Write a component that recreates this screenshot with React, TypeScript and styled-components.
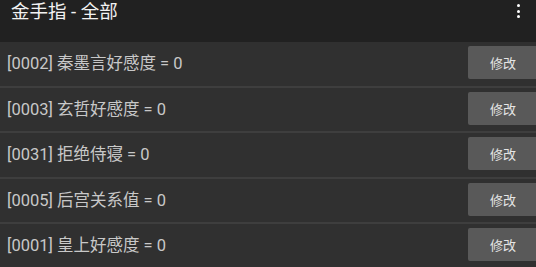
import React from "react";
import styled, { createGlobalStyle } from "styled-components";

const GlobalStyle = createGlobalStyle`
  html, body {
    margin: 0;
    padding: 0;
    background: #303030;
    overflow: hidden;
  }
  body {
    font-family: Roboto, "Noto Sans CJK SC", sans-serif;
  }
`;

const Page = styled.div`
  width: 536px;
  height: 267px;
  display: flex;
  flex-direction: column;
  background: #303030;
  overflow: hidden;
`;

const AppBar = styled.header`
  height: 42px;
  flex-shrink: 0;
  background: #212121;
  display: flex;
  align-items: flex-start;
  justify-content: space-between;
  padding: 0 0 0 11px;
  box-sizing: border-box;
`;

const Title = styled.h1`
  margin: 0;
  font-size: 18.5px;
  font-weight: 400;
  line-height: 24px;
  color: #f2f2f2;
`;

const MenuButton = styled.div`
  width: 36px;
  height: 22px;
  display: flex;
  flex-direction: column;
  align-items: center;
  gap: 2.7px;
  padding-top: 4px;
  box-sizing: border-box;
`;

const Dot = styled.span`
  width: 3px;
  height: 3px;
  border-radius: 50%;
  background: #ffffff;
`;

const List = styled.ul`
  margin: 0;
  padding: 0;
  list-style: none;
`;

const Row = styled.li`
  height: 43.5px;
  display: flex;
  align-items: flex-start;
  justify-content: space-between;
  border-bottom: 2px solid #3e3e3e;
`;

const Label = styled.span`
  font-size: 16.5px;
  font-weight: 400;
  line-height: 44px;
  color: #c8c8c8;
  padding-left: 7px;
  white-space: nowrap;
`;

const EditButton = styled.button`
  width: 70px;
  height: 33px;
  margin: 4px -2px 0 0;
  border: none;
  border-radius: 2px;
  background: #595959;
  color: #e6e6e6;
  font-family: Roboto, "Noto Sans CJK SC", sans-serif;
  font-size: 13px;
  padding: 0;
`;

const cheats = [
  { id: "0002", name: "秦墨言好感度", value: 0 },
  { id: "0003", name: "玄哲好感度", value: 0 },
  { id: "0031", name: "拒绝侍寝", value: 0 },
  { id: "0005", name: "后宫关系值", value: 0 },
  { id: "0001", name: "皇上好感度", value: 0 },
];

const App = () => (
  <>
    <GlobalStyle />
    <Page>
      <AppBar>
        <Title>金手指 - 全部</Title>
        <MenuButton>
          <Dot />
          <Dot />
          <Dot />
        </MenuButton>
      </AppBar>
      <List>
        {cheats.map((c) => (
          <Row key={c.id}>
            <Label>
              [{c.id}] {c.name} = {c.value}
            </Label>
            <EditButton>修改</EditButton>
          </Row>
        ))}
      </List>
    </Page>
  </>
);

export default App;
